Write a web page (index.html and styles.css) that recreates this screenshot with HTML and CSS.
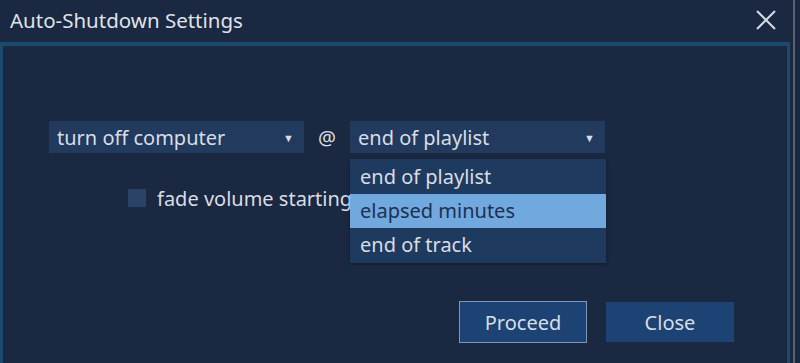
FILE: index.html
```html
<!DOCTYPE html>
<html>
<head>
<meta charset="utf-8">
<link rel="stylesheet" href="styles.css">
</head>
<body>
<div class="window">
  <div class="titlebar">
    <div class="title">Auto-Shutdown Settings</div>
    <div class="close-x">
      <svg width="22" height="22" viewBox="0 0 22 22"><path d="M2 2 L20 20 M20 2 L2 20" stroke="#d6dbe2" stroke-width="2" fill="none"/></svg>
    </div>
  </div>
  <div class="panel">
    <div class="row-selects">
      <div class="select s1"><span>turn off computer</span><span class="arrow">▼</span></div>
      <div class="at">@</div>
      <div class="select-wrap">
        <div class="select s2"><span>end of playlist</span><span class="arrow">▼</span></div>
        <div class="popup">
          <div class="opt">end of playlist</div>
          <div class="opt sel">elapsed minutes</div>
          <div class="opt">end of track</div>
        </div>
      </div>
    </div>
    <div class="row-check">
      <div class="box"></div>
      <div class="label">fade volume starting</div>
    </div>
    <div class="row-buttons">
      <div class="btn proceed">Proceed</div>
      <div class="btn close">Close</div>
    </div>
  </div>
  <div class="edge"></div>
</div>
</body>
</html>
```
FILE: styles.css
```css
html, body { margin: 0; padding: 0; }
body {
  width: 800px; height: 363px; overflow: hidden;
  background: #1b2841;
  font-family: "Noto Sans", "Open Sans", sans-serif;
  color: #d8dde5;
}
.window { position: relative; width: 800px; height: 363px; }
.titlebar {
  height: 42px; display: flex; align-items: center; justify-content: space-between;
  padding: 0 0 0 10px; width: 780px;
}
.title { font-size: 20.5px; color: #dfe3ea; margin-top: -2px; }
.close-x { width: 22px; height: 22px; margin-right: 13px; margin-top: -2px; }
.panel {
  width: 784px;
  border-top: 4px solid #1b4a6e;
  border-left: 3px solid #1b4a6e;
  border-right: 3px solid #1b4a6e;
  box-sizing: content-box;
  padding-top: 75px; height: 242px;
}
.row-selects { display: flex; align-items: center; margin-left: 46px; }
.select {
  width: 255px; height: 32px; background: #213a5e;
  display: flex; align-items: center; justify-content: space-between;
  box-sizing: border-box; padding: 0 10px 0 8px; font-size: 20px;
}
.arrow { font-size: 11px; color: #d8dde5; }
.at { width: 46px; text-align: center; font-size: 20px; }
.select-wrap { position: relative; }
.popup {
  position: absolute; left: 0; top: 38px; width: 256px;
  background: #1f3a5f; box-shadow: 0 1px 3px rgba(0,0,0,0.4);
  padding: 1px 0;
}
.opt { height: 34px; line-height: 34px; padding-left: 10px; font-size: 20px; }
.opt.sel { background: #71a8de; color: #1b3152; }
.row-check { display: flex; align-items: center; margin-left: 125px; margin-top: 36px; height: 18px; }
.box { width: 18px; height: 18px; background: #2a4468; flex: none; }
.label { margin-left: 11px; font-size: 20px; white-space: nowrap; }
.row-buttons { display: flex; justify-content: flex-end; margin-right: 53px; margin-top: 94px; gap: 19px; }
.btn {
  width: 128px; height: 42px; box-sizing: border-box; background: #1c4373;
  display: flex; align-items: center; justify-content: center; font-size: 20px;
}
.btn.proceed { border: 1px solid #7c98b8; }
.btn.close { border: 1px solid #1c4373; height: 40px; margin-top: 1px; }
.edge {
  position: absolute; right: 5px; top: 0; width: 2px; height: 363px; background: #5a6270;
}
```
